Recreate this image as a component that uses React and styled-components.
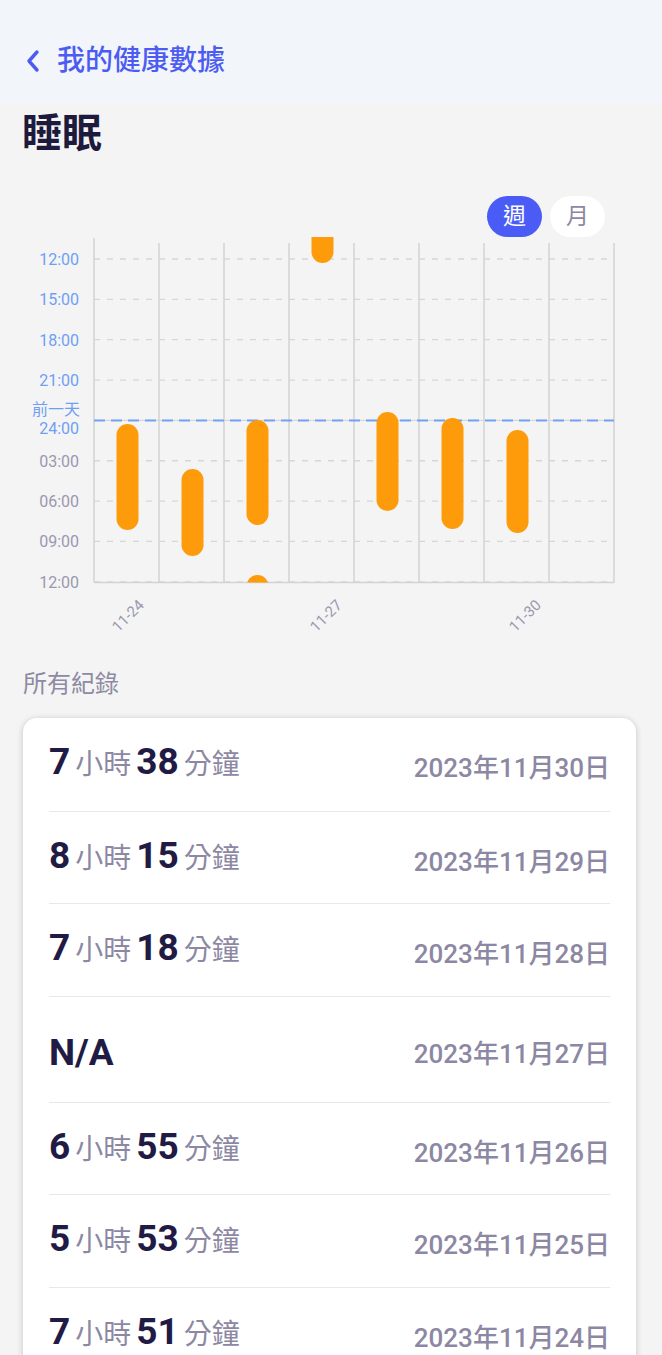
import React from "react";
import styled, { createGlobalStyle } from "styled-components";

const Global = createGlobalStyle`
  html, body { margin: 0; padding: 0; overflow: hidden; }
  body {
    background: #f4f4f4;
    font-family: Roboto, "Noto Sans CJK TC", "Noto Sans", sans-serif;
    -webkit-font-smoothing: antialiased;
  }
`;

const Page = styled.div`
  width: 662px;
  min-height: 1355px;
  background: #f4f4f4;
`;

const Header = styled.header`
  height: 104px;
  box-sizing: border-box;
  padding: 18px 0 0 25px;
  background: #f2f5f9;
  display: flex;
  align-items: center;
  gap: 16px;
  color: #4c5cf2;
`;

const HeaderTitle = styled.span`
  font-size: 28px;
  font-weight: 500;
  line-height: 1;
  color: #4c5cf2;
`;

const Title = styled.h1`
  margin: 0;
  padding: 6px 0 0 22px;
  font-size: 40px;
  line-height: 48px;
  font-weight: 700;
  color: #1d1a3c;
`;

const ToggleRow = styled.div`
  display: flex;
  justify-content: flex-end;
  gap: 8px;
  padding-right: 57px;
  margin-top: 38px;
`;

const Pill = styled.button`
  width: 55px;
  height: 41px;
  border: none;
  border-radius: 21px;
  padding: 0;
  font-family: inherit;
  font-size: 23px;
  line-height: 41px;
  background: ${(p) => (p.$active ? "#4b5bf6" : "#ffffff")};
  color: ${(p) => (p.$active ? "#ffffff" : "#8c88a3")};
`;

const ChartSvg = styled.svg`
  display: block;
  width: 662px;
  height: 404px;
  font-family: Roboto, "Noto Sans CJK TC", sans-serif;
`;

const Section = styled.section`
  padding: 0 26px 0 23px;
`;

const SectionLabel = styled.div`
  margin-top: 27px;
  font-size: 24px;
  line-height: 32px;
  color: #8e8aa3;
`;

const Card = styled.div`
  margin-top: 18px;
  background: #ffffff;
  border-radius: 14px;
  box-shadow: 0 1px 6px rgba(0, 0, 0, 0.2);
  padding: 0 26px;
`;

const Row = styled.div`
  display: flex;
  justify-content: space-between;
  align-items: flex-start;
  box-sizing: border-box;
  height: ${(p) => (p.$na ? "106px" : "92.6px")};
  border-top: ${(p) => (p.$first ? "none" : "1.5px solid #e8e7ef")};
`;

const Duration = styled.div`
  display: flex;
  align-items: baseline;
  line-height: 1;
  padding-top: ${(p) => (p.$na ? "37px" : "25px")};
`;

const Num = styled.span`
  font-size: 37px;
  font-weight: 700;
  line-height: 1;
  color: #1f1b45;
`;

const Unit = styled.span`
  font-size: 28px;
  line-height: 1;
  color: #8c88a3;
  margin: 0 5px;
`;

const DateText = styled.span`
  font-size: 26px;
  font-weight: 500;
  line-height: 1;
  color: #8c88a3;
  padding-top: ${(p) => (p.$na ? "44px" : "37px")};
`;

const X0 = 94;
const STEP = 65;
const X_END = 614;
const Y_TOP = 258;
const Y_STEP = 40.35;
const Y_BOTTOM = 581.5;

const yLabels = [
  { t: "12:00", blue: true },
  { t: "15:00", blue: true },
  { t: "18:00", blue: true },
  { t: "21:00", blue: true },
  { t: "24:00", blue: true },
  { t: "03:00" },
  { t: "06:00" },
  { t: "09:00" },
  { t: "12:00" },
];

const bars = [
  { c: 0, y1: 423, y2: 529 },
  { c: 1, y1: 468, y2: 555 },
  { c: 2, y1: 419, y2: 524 },
  { c: 2, y1: 574, y2: 610 },
  { c: 3, y1: 210, y2: 262 },
  { c: 4, y1: 411, y2: 510 },
  { c: 5, y1: 417, y2: 528 },
  { c: 6, y1: 429, y2: 532 },
];

const xLabels = [
  { t: "11-24", x: 145 },
  { t: "11-27", x: 343 },
  { t: "11-30", x: 542 },
];

function SleepChart() {
  return (
    <ChartSvg viewBox="0 236 662 404">
      <defs>
        <clipPath id="plot">
          <rect x={X0} y={236} width={X_END - X0} height={Y_BOTTOM - 236} />
        </clipPath>
      </defs>
      {yLabels.map((l, i) => {
        const y = Y_TOP + i * Y_STEP;
        if (i === 4) return null;
        return (
          <line
            key={"g" + i}
            x1={X0}
            x2={608}
            y1={y}
            y2={y}
            stroke="#d6d6d6"
            strokeWidth="1.3"
            strokeDasharray="6 7"
          />
        );
      })}
      <line x1={X0} x2={X_END} y1={419.4} y2={419.4} stroke="#d6d6d6" strokeWidth="1.3" />
      {Array.from({ length: 9 }).map((_, i) => (
        <line
          key={"v" + i}
          x1={X0 + i * STEP}
          x2={X0 + i * STEP}
          y1={i === 0 ? 237 : 242}
          y2={Y_BOTTOM}
          stroke="#d3d3d3"
          strokeWidth="1.5"
        />
      ))}
      <line x1={X0} x2={X_END} y1={Y_BOTTOM} y2={Y_BOTTOM} stroke="#d3d3d3" strokeWidth="1.5" />
      <line
        x1={X0}
        x2={X_END}
        y1={419.4}
        y2={419.4}
        stroke="#72a2f5"
        strokeWidth="2"
        strokeDasharray="11 6"
      />
      <g clipPath="url(#plot)">
        {bars.map((b, i) => {
          const cx = X0 + b.c * STEP + 33.5;
          return (
            <rect
              key={"b" + i}
              x={cx - 11}
              y={b.y1}
              width={22}
              height={b.y2 - b.y1}
              rx={11}
              fill="#fd9b0b"
            />
          );
        })}
      </g>
      {yLabels.map((l, i) => {
        const y = Y_TOP + i * Y_STEP + (i === 4 ? 14 : 6);
        return (
          <text
            key={"l" + i}
            x={79}
            y={y}
            textAnchor="end"
            fontSize="16"
            fill={l.blue ? "#6f9ff5" : "#9b98b0"}
          >
            {l.t}
          </text>
        );
      })}
      <text x={80} y={414} textAnchor="end" fontSize="16" fill="#6f9ff5">
        前一天
      </text>
      {xLabels.map((l) => (
        <text
          key={l.t}
          x={l.x}
          y={605}
          textAnchor="end"
          fontSize="15"
          fill="#9b98b0"
          transform={`rotate(-45 ${l.x} 605)`}
        >
          {l.t}
        </text>
      ))}
    </ChartSvg>
  );
}

const records = [
  { h: "7", m: "38", d: "2023年11月30日" },
  { h: "8", m: "15", d: "2023年11月29日" },
  { h: "7", m: "18", d: "2023年11月28日" },
  { na: true, d: "2023年11月27日" },
  { h: "6", m: "55", d: "2023年11月26日" },
  { h: "5", m: "53", d: "2023年11月25日" },
  { h: "7", m: "51", d: "2023年11月24日" },
];

function BackIcon() {
  return (
    <svg width="16" height="24" viewBox="0 0 16 24" fill="none">
      <polyline
        points="12,3 4,12 12,21"
        stroke="#4c5cf2"
        strokeWidth="3.4"
        strokeLinecap="round"
        strokeLinejoin="round"
      />
    </svg>
  );
}

export default function App() {
  return (
    <Page>
      <Global />
      <Header>
        <BackIcon />
        <HeaderTitle>我的健康數據</HeaderTitle>
      </Header>
      <Title>睡眠</Title>
      <ToggleRow>
        <Pill $active>週</Pill>
        <Pill>月</Pill>
      </ToggleRow>
      <SleepChart />
      <Section>
        <SectionLabel>所有紀錄</SectionLabel>
        <Card>
          {records.map((r, i) => (
            <Row key={r.d} $first={i === 0} $na={r.na}>
              {r.na ? (
                <Duration $na>
                  <Num>N/A</Num>
                </Duration>
              ) : (
                <Duration>
                  <Num>{r.h}</Num>
                  <Unit>小時</Unit>
                  <Num>{r.m}</Num>
                  <Unit>分鐘</Unit>
                </Duration>
              )}
              <DateText $na={r.na}>{r.d}</DateText>
            </Row>
          ))}
        </Card>
      </Section>
    </Page>
  );
}
